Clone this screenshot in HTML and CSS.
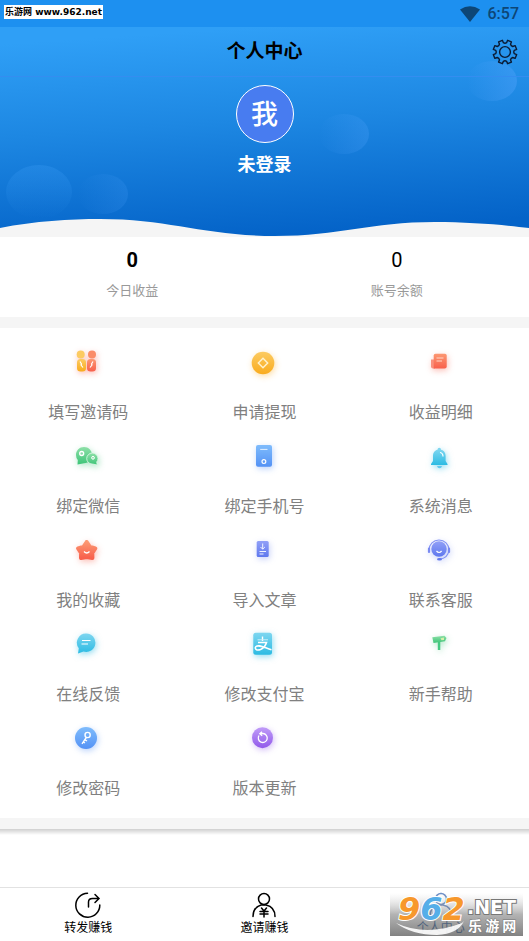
FILE: index.html
```html
<!DOCTYPE html>
<html lang="zh-CN">
<head>
    <meta charset="UTF-8">
    <meta name="viewport" content="width=device-width, initial-scale=1">
    <title>个人中心</title>
    <link rel="stylesheet" href="styles.css">
</head>
<body>
    <div class="status-bar">
        <span class="site-tag">乐游网 www.962.net</span>
        <svg class="wifi" viewBox="0 0 20 16" aria-hidden="true"><path d="M0 3.500Q10-3 20 3.500L10 16Z"/></svg>
        <span class="clock">6:57</span>
    </div>

    <header class="hero">
        <svg class="hero-bg" viewBox="0 0 529 210" preserveAspectRatio="none" aria-hidden="true">
            <defs>
                <linearGradient id="sky" gradientUnits="userSpaceOnUse" x1="258" y1="0" x2="272" y2="208">
                    <stop offset="0" stop-color="#2f9ff6"/>
                    <stop offset=".45" stop-color="#1d87e2"/>
                    <stop offset="1" stop-color="#0463c8"/>
                </linearGradient>
                <linearGradient id="bubbleA" x1="0" y1="0" x2="1" y2="0">
                    <stop offset="0" stop-color="#4a9ff8" stop-opacity="0"/>
                    <stop offset="1" stop-color="#4a9ff8" stop-opacity=".5"/>
                </linearGradient>
                <linearGradient id="bubbleB" x1="0" y1="0" x2="0" y2="1">
                    <stop offset="0" stop-color="#3b9cf5" stop-opacity=".3"/>
                    <stop offset="1" stop-color="#3b9cf5" stop-opacity="0"/>
                </linearGradient>
            </defs>
            <rect width="529" height="210" fill="url(#sky)"/>
            <ellipse cx="492" cy="54" rx="25" ry="20" fill="url(#bubbleA)"/>
            <ellipse cx="344" cy="107" rx="25" ry="20" fill="url(#bubbleA)" opacity=".6"/>
            <ellipse cx="39" cy="165" rx="33" ry="27" fill="url(#bubbleB)"/>
            <ellipse cx="103" cy="167" rx="25" ry="20" fill="url(#bubbleA)" opacity=".4"/>
            <path d="M0 201C35 194 70 192 100 192C170 192 205 209 275 209C340 209 370 195 435 195C470 195 505 198 529 201V210H0Z" fill="#f5f5f5"/>
        </svg>
        <div class="title-bar">
            <h1>个人中心</h1>
            <button class="settings" type="button" aria-label="设置">
                <svg viewBox="0 0 26 26" fill="none" stroke="#0b1a33" stroke-width="1.400" stroke-linejoin="round">
                    <path d="M10.400 1.300 11.400 3.700Q13 4.700 14.600 3.700L15.600 1.300 19.400 2.900 18.500 5.300Q19 7 20.700 7.500L23.100 6.600 24.700 10.400 22.300 11.400Q21.300 13 22.300 14.600L24.700 15.600 23.100 19.400 20.700 18.500Q19 19 18.500 20.700L19.400 23.100 15.600 24.700 14.600 22.300Q13 21.300 11.400 22.300L10.400 24.700 6.600 23.100 7.500 20.700Q7 19 5.300 18.500L2.900 19.400 1.300 15.600 3.700 14.600Q4.700 13 3.700 11.400L1.300 10.400 2.900 6.600 5.300 7.500Q7 7 7.500 5.300L6.600 2.900Z"/>
                    <circle cx="13" cy="13" r="5.400"/>
                </svg>
            </button>
        </div>
        <div class="avatar">我</div>
        <p class="user-name">未登录</p>
    </header>

    <section class="stats">
        <div class="stat">
            <strong class="stat-value">0</strong>
            <span class="stat-label">今日收益</span>
        </div>
        <div class="stat">
            <span class="stat-value">0</span>
            <span class="stat-label">账号余额</span>
        </div>
    </section>

    <main class="menu">
        <a class="menu-item" href="#">
            <svg class="glow-red" viewBox="0 0 50 50">
                <defs>
                    <linearGradient id="yellow" x1="0" y1="0" x2="0" y2="1"><stop offset="0" stop-color="#fccb62"/><stop offset="1" stop-color="#f9ab1d"/></linearGradient>
                    <linearGradient id="red" x1="0" y1="0" x2="0" y2="1"><stop offset="0" stop-color="#fc9872"/><stop offset="1" stop-color="#f8604c"/></linearGradient>
                    <linearGradient id="green" x1="0" y1="0" x2="0" y2="1"><stop offset="0" stop-color="#8ee0a8"/><stop offset="1" stop-color="#3cc477"/></linearGradient>
                    <linearGradient id="blue" x1="0" y1="0" x2="0" y2="1"><stop offset="0" stop-color="#7fbcfc"/><stop offset="1" stop-color="#5492f5"/></linearGradient>
                    <linearGradient id="cyan" x1="0" y1="0" x2="0" y2="1"><stop offset="0" stop-color="#7dd6f0"/><stop offset="1" stop-color="#2cbbe3"/></linearGradient>
                    <linearGradient id="indigo" x1="0" y1="0" x2="0" y2="1"><stop offset="0" stop-color="#91a0f7"/><stop offset="1" stop-color="#5f78ee"/></linearGradient>
                    <linearGradient id="purple" x1="0" y1="0" x2="0" y2="1"><stop offset="0" stop-color="#c09cf8"/><stop offset="1" stop-color="#9159ea"/></linearGradient>
                </defs>
                <circle cx="17.700" cy="16.500" r="4" fill="#fccb62"/>
                <rect x="14" y="21" width="9" height="12.500" rx="3.500" fill="url(#yellow)"/>
                <circle cx="29" cy="16.500" r="4" fill="#fa8c68"/>
                <rect x="24" y="21" width="9" height="12.500" rx="3.500" fill="url(#red)"/>
                <path d="M17 23.500 18.500 26 18 27 20 29.500M30 23.500 28.500 26 29 27 27 29.500" fill="none" stroke="#fff" stroke-width="1.200"/>
            </svg>
            <span>填写邀请码</span>
        </a>
        <a class="menu-item" href="#">
            <svg class="glow-yellow" viewBox="0 0 50 50">
                <circle cx="24" cy="25" r="11.300" fill="url(#yellow)"/>
                <path d="M24 20.300 28.700 25 24 29.700 19.300 25Z" fill="none" stroke="#fff2cf" stroke-width="1.400"/>
            </svg>
            <span>申请提现</span>
        </a>
        <a class="menu-item" href="#">
            <svg class="glow-red" viewBox="0 0 50 50">
                <path d="M15 21.500H19V30.500H17Q15 30.500 15 28.500Z" fill="#f9907c"/>
                <path d="M19.500 15.700H29Q30.700 15.700 30.700 17.500V28.500Q30.700 30.500 28.700 30.500H17.700V17.500Q17.700 15.700 19.500 15.700Z" fill="url(#red)"/>
                <path d="M20.500 20H27.500M20.500 23H26" stroke="#ffd7c8" stroke-width="1"/>
            </svg>
            <span>收益明细</span>
        </a>

        <a class="menu-item" href="#">
            <svg class="glow-green" viewBox="0 0 50 50">
                <path d="M21 15C16.500 15 13 18.500 13 23Q13 26 14.800 28L14.500 32.500 21 31.200C26 31 29 27.500 29 23S25.500 15 21 15Z" fill="url(#green)"/>
                <path d="M29.300 21C26.200 21 23.700 23.500 23.700 26.500S26 32 29.300 32L34.300 33 33.700 30Q35 28.500 35 26.500C35 23.500 32.500 21 29.300 21Z" fill="url(#green)" stroke="#e4f9eb" stroke-width=".8"/>
                <circle cx="18.700" cy="21.500" r="2" fill="#8edbab" stroke="#fff" stroke-width="1.300"/>
                <circle cx="30" cy="25.800" r="1.400" fill="#8edbab" stroke="#fff" stroke-width="1"/>
            </svg>
            <span>绑定微信</span>
        </a>
        <a class="menu-item" href="#">
            <svg class="glow-blue" viewBox="0 0 50 50">
                <rect x="17" y="13" width="16" height="21.700" rx="2" fill="url(#blue)"/>
                <path d="M21.200 17.400H28.500" stroke="#e3f0ff" stroke-width="1"/>
                <circle cx="24.900" cy="29.600" r="1.900" fill="none" stroke="#fff" stroke-width="1.200"/>
            </svg>
            <span>绑定手机号</span>
        </a>
        <a class="menu-item" href="#">
            <svg class="glow-cyan" viewBox="0 0 50 50">
                <circle cx="23.300" cy="17.500" r="1.700" fill="#7dd6f0"/>
                <path d="M23.300 17.500C19 17.500 17 20.500 17 24V29L15 32V33H31.500V32L29.600 29V24C29.600 20.500 27.600 17.500 23.300 17.500Z" fill="url(#cyan)"/>
                <path d="M21 34H26Q25.500 36.200 23.500 36.200T21 34Z" fill="#62c9ee"/>
                <path d="M24 20.500Q27 21 27 24.500" fill="none" stroke="#fff" stroke-width="1.200"/>
            </svg>
            <span>系统消息</span>
        </a>

        <a class="menu-item" href="#">
            <svg class="glow-red" viewBox="0 0 50 50">
                <path d="M23.700 16 26.700 20.700 32.300 22.300 29.300 26.800 29.400 32 23.700 31 18 32 18.100 26.800 15.100 22.300 20.700 20.700Z" fill="url(#red)" stroke="url(#red)" stroke-width="4" stroke-linejoin="round"/>
                <path d="M21 25.500Q23.700 28.500 26.500 25.500" fill="none" stroke="#fff" stroke-width="1.300"/>
            </svg>
            <span>我的收藏</span>
        </a>
        <a class="menu-item" href="#">
            <svg class="glow-indigo" viewBox="0 0 50 50">
                <rect x="17.700" y="15" width="12" height="16" rx="1.500" fill="url(#indigo)"/>
                <path d="M23.700 17.500V23M21.500 21 23.700 23.200 25.900 21M20.500 25.500H27M20.500 28H24.500" fill="none" stroke="#fff" stroke-width=".9"/>
            </svg>
            <span>导入文章</span>
        </a>
        <a class="menu-item" href="#">
            <svg class="glow-indigo" viewBox="0 0 50 50">
                <circle cx="23" cy="23" r="7.700" fill="url(#indigo)"/>
                <path d="M13 24A10 10 0 1 1 33 24Q32 32 24 33.200" fill="none" stroke="#8493f4" stroke-width="1.100"/>
                <path d="M13 22.500V26M33 22.500V26" stroke="#7a8af2" stroke-width="2.200" stroke-linecap="round"/>
                <ellipse cx="23.500" cy="33.200" rx="2.500" ry="1.300" fill="#6379ee"/>
                <path d="M20.500 25Q23 28 25.600 25" fill="none" stroke="#fff" stroke-width="1.200"/>
            </svg>
            <span>联系客服</span>
        </a>

        <a class="menu-item" href="#">
            <svg class="glow-cyan" viewBox="0 0 50 50">
                <path d="M23 13.500A9.200 9.200 0 0 0 15.800 28.300L15 33.500 20.500 31.500A9.200 9.200 0 1 0 23 13.500Z" fill="url(#cyan)"/>
                <path d="M19 20.500H27.500M18.500 24H25" stroke="#fff" stroke-width="1.200"/>
            </svg>
            <span>在线反馈</span>
        </a>
        <a class="menu-item" href="#">
            <svg class="glow-cyan" viewBox="0 0 50 50">
                <rect x="14.300" y="12.800" width="18.700" height="22" rx="2.500" fill="url(#cyan)"/>
                <path d="M23.500 16.500V21" fill="none" stroke="#fff" stroke-width="1.400"/>
                <path d="M18.500 19.800H29" stroke="#c9f0fa" stroke-width="1"/>
                <path d="M19 22.500H27.500Q26 27.500 21.500 29.500C17.500 31 15 28.500 17 26.500C19.500 24.300 24 27 32.500 29.800" fill="none" stroke="#fff" stroke-width="1.600"/>
            </svg>
            <span>修改支付宝</span>
        </a>
        <a class="menu-item" href="#">
            <svg class="glow-green" viewBox="0 0 50 50">
                <rect x="21.800" y="20" width="2.500" height="10" fill="#45c982"/>
                <path d="M16.300 17.200 28.500 15.700 30.500 18 29 21.200 17.500 23Z" fill="url(#green)"/>
                <path d="M24.500 18.300 28 17.500V20L25.500 20.300Z" fill="#d5efa8"/>
            </svg>
            <span>新手帮助</span>
        </a>

        <a class="menu-item" href="#">
            <svg class="glow-blue" viewBox="0 0 50 50">
                <circle cx="23" cy="24" r="11" fill="url(#blue)"/>
                <g fill="none" stroke="#fff" stroke-width="1.400">
                    <circle cx="24.600" cy="21" r="2.600"/>
                    <path d="M23.300 23.500 19 29.800M22 25.800 24 27M20.300 28 22 29"/>
                </g>
            </svg>
            <span>修改密码</span>
        </a>
        <a class="menu-item" href="#">
            <svg class="glow-purple" viewBox="0 0 50 50">
                <circle cx="23.500" cy="23.700" r="10.500" fill="url(#purple)"/>
                <path d="M20 21.500A4.500 4.500 0 1 0 24 19.500L21.500 19.700M23 17.700 20.800 19.800 23.200 21.800" fill="none" stroke="#fff" stroke-width="1.300"/>
            </svg>
            <span>版本更新</span>
        </a>
    </main>

    <div class="divider"></div>

    <nav class="tab-bar">
        <a class="tab" href="#">
            <svg viewBox="0 0 28 28" fill="none" stroke="#000" stroke-width="1.500" stroke-linecap="round">
                <path d="M13.500 2.200A12 12 0 1 0 25.800 14M14.500 16V11Q14.500 7.500 18.500 7.500H24.500M21 3.500 25 7.500 21 11.500"/>
            </svg>
            <span>转发赚钱</span>
        </a>
        <a class="tab" href="#">
            <svg viewBox="0 0 28 28" fill="none" stroke="#000" stroke-width="1.500" stroke-linecap="round">
                <circle cx="14" cy="8" r="5.500"/>
                <path d="M3 25.500Q3 16.500 11 14H16Q25 16 25 25.500M11.500 17 14 20 16.500 17M10 20.500H18M10 23H18M14 20V26"/>
            </svg>
            <span>邀请赚钱</span>
        </a>
        <a class="tab active" href="#">
            <svg viewBox="0 0 28 28" fill="none" stroke="#2f5fae" stroke-width="1.500" stroke-linecap="round">
                <circle cx="14" cy="8" r="5.500"/>
                <path d="M3 25.500Q3 16.500 11 14H16Q25 16 25 25.500"/>
            </svg>
            <span>个人中心</span>
        </a>
        <svg class="site-logo" viewBox="0 0 133 43" role="img" aria-label="962.NET 乐游网">
            <defs>
                <linearGradient id="shade" x1="0" y1="0" x2="0" y2="1">
                    <stop offset="0" stop-color="#fff" stop-opacity=".3"/>
                    <stop offset=".5" stop-color="#8a8a8a" stop-opacity=".65"/>
                    <stop offset="1" stop-color="#4c4c4c" stop-opacity=".7"/>
                </linearGradient>
            </defs>
            <rect width="133" height="43" fill="url(#shade)"/>
            <path d="M6 30Q36 44 72 30L74 28Q68 41 47 42Q22 42 6 30Z" fill="#fff" opacity=".9"/>
            <text class="logo-digits" x="8" y="27"><tspan class="orange">9</tspan><tspan class="sky">6</tspan><tspan class="orange">2</tspan></text>
            <text class="logo-net" x="77" y="21">.NET</text>
            <text class="logo-cn" x="78" y="38">乐 游 网</text>
        </svg>
    </nav>
</body>
</html>
```
FILE: styles.css
```css
* {
    box-sizing: border-box;
}

body {
    margin: 0;
    min-height: 100vh;
    display: flex;
    flex-direction: column;
    background: #fff;
    color: #000;
    font-family: Roboto, "Noto Sans CJK SC", sans-serif;
}

a {
    color: inherit;
    text-decoration: none;
}

/* status bar */
.status-bar {
    position: relative;
    display: flex;
    align-items: center;
    justify-content: flex-end;
    gap: 8px;
    height: 27px;
    padding: 0 10px;
    background: #1d90f0;
    color: #0d4676;
}

.site-tag {
    position: absolute;
    top: 5px;
    left: 4px;
    height: 14px;
    padding: 0 1px;
    background: #fff;
    color: #000;
    font: bold 9px/15px "DejaVu Sans", "Noto Sans CJK SC", sans-serif;
    white-space: nowrap;
}

.wifi {
    width: 20px;
    height: 16px;
    fill: #0d4676;
}

.clock {
    font-size: 16px;
    font-weight: 500;
}

/* header */
.hero {
    position: relative;
    display: flex;
    flex-direction: column;
    align-items: center;
    padding-bottom: 60px;
}

.hero-bg {
    position: absolute;
    inset: 0;
    width: 100%;
    height: 100%;
    z-index: -1;
}

.title-bar {
    display: grid;
    grid-template-columns: 1fr auto 1fr;
    align-items: center;
    width: 100%;
    height: 50px;
    padding: 0 11px;
    border-bottom: 1px solid #348df0;
}

.title-bar h1 {
    grid-column: 2;
    margin: 0;
    font-size: 19px;
    line-height: 28px;
}

.settings {
    justify-self: end;
    width: 26px;
    height: 26px;
    padding: 0;
    border: none;
    background: none;
    cursor: pointer;
}

.settings svg {
    display: block;
}

.avatar {
    width: 58px;
    height: 58px;
    margin-top: 8px;
    border: 1px solid #fff;
    border-radius: 50%;
    background: #487cf0;
    color: #fff;
    font-size: 27px;
    font-weight: 500;
    line-height: 58px;
    text-align: center;
}

.user-name {
    margin: 10px 0 0;
    color: #fff;
    font-size: 18px;
    font-weight: bold;
    line-height: 24px;
}

/* income */
.stats {
    display: flex;
    height: 91px;
    padding-top: 10px;
    border-bottom: 11px solid #f5f5f5;
}

.stat {
    flex: 1;
    display: flex;
    flex-direction: column;
    align-items: center;
    gap: 8px;
}

.stat-value {
    font-size: 20px;
    line-height: 26px;
}

.stat-label {
    color: #999;
    font-size: 13px;
    line-height: 20px;
}

/* menu */
.menu {
    display: grid;
    grid-template-columns: repeat(3, 1fr);
    padding: 10px 0;
}

.menu-item {
    display: flex;
    flex-direction: column;
    align-items: center;
    gap: 13px;
    padding-bottom: 7px;
    color: #808080;
    font-size: 16px;
    line-height: 24px;
}

.menu-item svg {
    width: 50px;
    height: 50px;
}

.glow-red { filter: drop-shadow(1px 2px 3px #f8604c66); }
.glow-yellow { filter: drop-shadow(1px 2px 3px #f9ab1d66); }
.glow-green { filter: drop-shadow(1px 2px 3px #3cc47766); }
.glow-blue { filter: drop-shadow(1px 2px 3px #5492f566); }
.glow-cyan { filter: drop-shadow(1px 2px 3px #2cbbe380); }
.glow-indigo { filter: drop-shadow(1px 2px 3px #5f78ee59); }
.glow-purple { filter: drop-shadow(1px 2px 3px #9159ea66); }

.divider {
    height: 17px;
    background: linear-gradient(#f5f5f5 0 11px, #cfcfcf 11px, #fff);
}

/* bottom tabs */
.tab-bar {
    position: relative;
    display: flex;
    margin-top: auto;
    height: 54px;
    border-top: 1px solid #e2e2e2;
}

.tab {
    flex: 1;
    display: flex;
    flex-direction: column;
    align-items: center;
    padding-top: 3px;
    font-size: 12px;
    line-height: 18px;
}

.tab svg {
    width: 28px;
    height: 28px;
}

.tab.active {
    color: #0b4f9e;
}

.site-logo {
    position: absolute;
    right: 6px;
    bottom: 5px;
    width: 133px;
    height: 43px;
}

.logo-digits {
    font: italic bold 32px "DejaVu Sans", sans-serif;
    stroke: #fff;
    stroke-width: 2px;
    paint-order: stroke;
}

.orange {
    fill: #f7982c;
}

.sky {
    fill: #55aee8;
}

.logo-net {
    font: bold 19px "DejaVu Sans", sans-serif;
    fill: #fff;
    stroke: #777;
    stroke-width: 2px;
    paint-order: stroke;
}

.logo-cn {
    font: bold 14px "Noto Sans CJK SC", sans-serif;
    fill: #fff;
    stroke: #777;
    stroke-width: 1px;
    paint-order: stroke;
}
```
